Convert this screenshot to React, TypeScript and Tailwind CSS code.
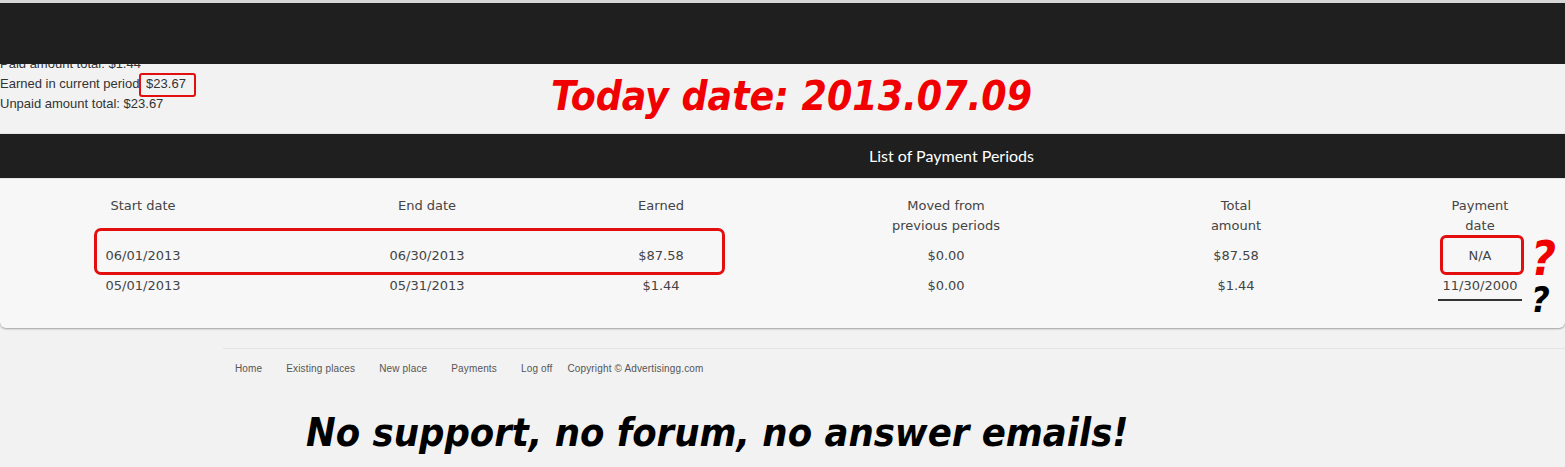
import React from "react";

const cols = [
  { h: ["Start date"], r1: "06/01/2013", r2: "05/01/2013" },
  { h: ["End date"], r1: "06/30/2013", r2: "05/31/2013" },
  { h: ["Earned"], r1: "$87.58", r2: "$1.44" },
  { h: ["Moved from", "previous periods"], r1: "$0.00", r2: "$0.00" },
  { h: ["Total", "amount"], r1: "$87.58", r2: "$1.44" },
  { h: ["Payment", "date"], r1: "N/A", r2: "11/30/2000" },
];

const cond = "font-['DejaVu_Sans_Condensed','DejaVu_Sans',sans-serif] font-stretch-condensed font-bold italic";

export default function App() {
  return (
    <div className="relative w-[1565px] h-[467px] overflow-hidden bg-[#f2f2f2]">
      <div className="h-[3px] bg-[#d6d6d6]" />
      <div className="relative z-10 h-[61px] bg-[#1f1f1f]" />
      <div className="relative -mt-[10px] h-[79px] font-['Liberation_Sans',Arial,sans-serif] text-[13px] leading-[20px] text-[#333]">
        <div>Paid amount total: $1.44</div>
        <div>
          Earned in current period{" "}
          <span className="relative ml-[3px]">
            $23.67
            <span className="absolute -left-[7px] -top-[3px] w-[57px] h-[24px] rounded-[3px] border-2 border-[#e30e0e]" />
          </span>
        </div>
        <div>Unpaid amount total: $23.67</div>
        <div className={`absolute left-[551px] top-[22px] text-[40.5px] leading-[40px] whitespace-nowrap text-[#f00000] ${cond}`}>
          Today date: 2013.07.09
        </div>
      </div>
      <div className="h-px bg-[#e4e4e4]" />
      <div className="h-[44px] bg-[#1f1f1f] flex items-center pl-[869px] font-['Lato',sans-serif] text-[16px] text-white">
        List of Payment Periods
      </div>
      <div className="h-px bg-[#e8e8e8]" />
      <div className="relative h-[149px] bg-[#f7f7f7] rounded-b-[6px] shadow-[0_1px_2px_rgba(0,0,0,0.35)] pt-[17px] pl-[73px] font-['DejaVu_Sans',sans-serif] text-[13px] leading-[20px] text-[#444]">
        <div className="grid grid-cols-[284px_234px_285px_290px_244px_140px]">
          {cols.map((c, i) => (
            <div key={i} className="w-[140px] flex flex-col items-center">
              <div className="h-[40px] flex flex-col items-center">
                {c.h.map((t) => (
                  <div key={t} className="whitespace-nowrap">{t}</div>
                ))}
              </div>
              <div className="mt-[5px] h-[30px] flex items-center whitespace-nowrap">{c.r1}</div>
              <div className="h-[30px] flex items-center whitespace-nowrap">{c.r2}</div>
            </div>
          ))}
        </div>
        <div className="absolute left-[94px] top-[49px] w-[631px] h-[47px] rounded-[7px] border-[3px] border-[#e30e0e]" />
        <div className="absolute left-[1440px] top-[56px] w-[84px] h-[40px] rounded-[6px] border-[3px] border-[#e30e0e]" />
        <div className="absolute left-[1438px] top-[120px] w-[84px] h-[2px] bg-[#333]" />
        <div className={`absolute left-[1531px] top-[61px] text-[48px] leading-[36px] text-[#f00000] ${cond}`}>?</div>
        <div className={`absolute left-[1531px] top-[107px] text-[36px] leading-[28px] text-black ${cond}`}>?</div>
      </div>
      <div className="mt-[20px] ml-[223px] border-t border-[#e4e4e4] pt-[10px] pl-[12px] flex font-['Liberation_Sans',Arial,sans-serif] text-[10px] leading-[20px] tracking-[0.15px] text-[#555]">
        <span>Home</span>
        <span className="ml-[24px]">Existing places</span>
        <span className="ml-[24px]">New place</span>
        <span className="ml-[24px]">Payments</span>
        <span className="ml-[24px]">Log off</span>
        <span className="ml-[15px]">Copyright © Advertisingg.com</span>
      </div>
      <div className={`absolute left-[306px] top-[413px] text-[39.5px] leading-[38px] whitespace-nowrap text-black ${cond}`}>
        No support, no forum, no answer emails!
      </div>
    </div>
  );
}
